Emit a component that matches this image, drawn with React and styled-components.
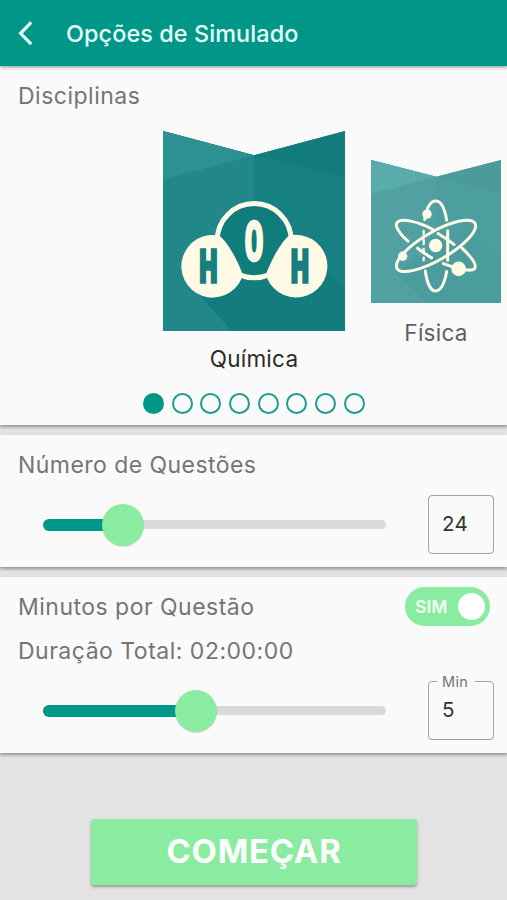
import React, { useState } from 'react';
import styled, { createGlobalStyle } from 'styled-components';

const GlobalStyle = createGlobalStyle`
  * {
    box-sizing: border-box;
  }

  body {
    margin: 0;
    background: #e3e3e3;
    font-family: Inter, 'Liberation Sans', sans-serif;
    overflow: hidden;
  }
`;

const ChemistryBanner = () => (
  <svg width="182" height="200" viewBox="163.2 131.3 181.8 199.7" preserveAspectRatio="none">
    <path d="M163.2 131.3L254.2 155.4L345 131.3V331H163.2Z" fill="#178080" />
    <path d="M163.2 131.3L254.2 155.4V240L200 294L232 331H163.2Z" fill="#218789" />
    <path d="M254.2 155.4L345 178V290L300 240H254.2Z" fill="#178181" />
    <path d="M163.2 131.3L254.2 155.4L163.2 179.8Z" fill="#2b9193" />
    <path d="M254.2 155.4L345 131.3V178Z" fill="#137d7d" />
    <path d="M198 293L232 331H345V290L300 240H250Z" fill="#137d7d" />
    <circle cx="254.3" cy="240.8" r="37" fill="#117c7c" stroke="#fefae6" strokeWidth="5" />
    <path d="M219.5 235.8A31.3 31.3 0 1 0 241.5 279L242.3 273C238 262 229 243 219.5 235.8Z" fill="#fefae6" />
    <path d="M289 235.8A31.3 31.3 0 1 1 267.5 279L266.5 273C271 262 280 243 289 235.8Z" fill="#fefae6" />
    <AtomLetter transform="translate(208.5 281) scale(.56 1)" $size={41.3} $color="#17807f">H</AtomLetter>
    <AtomLetter transform="translate(254.2 258.8) scale(.6 1)" $size={50} $color="#fefae6" $mono>O</AtomLetter>
    <AtomLetter transform="translate(300 281.5) scale(.56 1)" $size={41.3} $color="#17807f">H</AtomLetter>
  </svg>
);

const PhysicsBanner = () => (
  <svg width="130" height="143" viewBox="35 30 390 428" preserveAspectRatio="none">
    <path d="M35 30L231 80L425 30V458H35Z" fill="#4d9e9e" />
    <path d="M35 30L231 80V286L110 366L205 458H35Z" fill="#51a1a2" />
    <path d="M35 30L231 80L35 132Z" fill="#5aabac" />
    <path d="M231 80L425 30V130Z" fill="#4b9b9b" />
    <path d="M110 366L205 458H425V330L330 240L231 286Z" fill="#4b9c9c" />
    <g fill="none" stroke="#fefae6" strokeWidth="9" strokeLinecap="round">
      <path d="M196 208C202 172 214 153 229 153C246 153 257 180 262 210" />
      <path d="M198 362C203 399 215 422 229 422C245 422 256 397 262 364" />
      <path d="M193 242V253M193 268V282M193 296V308M193 322V330" strokeWidth="7" />
      <path d="M265 242V330" />
      <path d="M146 273C118 249 104 224 115 215C128 204 180 215 220 238M236 250C253 260 269 271 284 283" />
      <path d="M175 294C189 305 203 315 217 323M308 294C340 324 354 346 345 356C338 363 306 360 252 340" />
    </g>
    <ellipse cx="230" cy="287" rx="135" ry="42" transform="rotate(-30 230 287)" fill="none" stroke="#fefae6" strokeWidth="9" />
    <g fill="#fefae6">
      <circle cx="229" cy="286" r="20" />
      <circle cx="203" cy="192" r="14" />
      <circle cx="130" cy="318" r="14" />
      <circle cx="298" cy="356" r="22" />
    </g>
  </svg>
);

const Slider = ({ filled }) => (
  <Track>
    <TrackFill style={{ width: filled }} />
    <Thumb style={{ left: filled }} />
  </Track>
);

const App = () => {
  const [questions] = useState(24);
  const [minutes] = useState(5);
  const [page] = useState(0);

  return (
    <Screen>
      <GlobalStyle />
      <Header>
        <svg width="18" height="26" viewBox="0 0 18 26">
          <path d="M15.2 2.3L4.6 13.3L15.2 24.2" fill="none" stroke="#e6fffa" strokeWidth="3.2" />
        </svg>
        <Title>Opções de Simulado</Title>
      </Header>

      <Card $height={359}>
        <Label $top={17}>Disciplinas</Label>
        <Carousel>
          <Subject>
            <ChemistryBanner />
            <SubjectName $active>Química</SubjectName>
          </Subject>
          <Subject $small>
            <PhysicsBanner />
            <SubjectName>Física</SubjectName>
          </Subject>
        </Carousel>
        <Dots>
          {Array.from({ length: 8 }, (_, i) => (
            <Dot key={i} $active={i === page} />
          ))}
        </Dots>
      </Card>

      <Card $height={132}>
        <Label $top={17} $spacing={0.45}>Número de Questões</Label>
        <SliderRow $top={17}>
          <Slider filled={80} />
          <NumberBox>{questions}</NumberBox>
        </SliderRow>
      </Card>

      <Card $height={176}>
        <SwitchRow>
          <Label $spacing={0.48}>Minutos por Questão</Label>
          <Switch>
            SIM
            <SwitchKnob />
          </Switch>
        </SwitchRow>
        <Label $top={12}>Duração Total: 02:00:00</Label>
        <SliderRow $top={17}>
          <Slider filled={153} />
          <NumberBox>
            <BoxLabel>Min</BoxLabel>
            {minutes}
          </NumberBox>
        </SliderRow>
      </Card>

      <Footer>
        <StartButton>COMEÇAR</StartButton>
      </Footer>
    </Screen>
  );
};

const Screen = styled.div`
  width: 507px;
  height: 900px;
  display: flex;
  flex-direction: column;
  gap: 10px;
  background: #e3e3e3;
`;

const Header = styled.header`
  position: relative;
  z-index: 1;
  height: 66px;
  margin-bottom: -10px;
  padding-left: 16px;
  display: flex;
  align-items: center;
  gap: 32px;
  flex-shrink: 0;
  background: #009788;
  box-shadow: 0 1px 4px rgba(0, 0, 0, 0.45);
`;

const Title = styled.h1`
  margin: 0;
  font-size: 23.4px;
  font-weight: 500;
  letter-spacing: 0.1px;
  color: #e6fffa;
`;

const Card = styled.section`
  height: ${(p) => p.$height}px;
  flex-shrink: 0;
  display: flex;
  flex-direction: column;
  background: #fafafa;
  box-shadow: 0 2px 3px rgba(0, 0, 0, 0.36);
`;

const Label = styled.div`
  margin: ${(p) => p.$top || 0}px 0 0 18px;
  height: 26px;
  line-height: 26px;
  font-size: 23px;
  letter-spacing: ${(p) => p.$spacing || 0.5}px;
  white-space: nowrap;
  color: #757575;
`;

const Carousel = styled.div`
  display: flex;
  gap: 26px;
  height: 244px;
  margin-top: 22px;
  padding-left: 163px;
`;

const Subject = styled.div`
  display: flex;
  flex-direction: column;
  align-items: center;
  gap: ${(p) => (p.$small ? 17 : 15)}px;
  padding-top: ${(p) => (p.$small ? 29 : 0)}px;

  svg {
    display: block;
  }
`;

const SubjectName = styled.div`
  line-height: 26px;
  font-size: 22.5px;
  letter-spacing: 0.25px;
  color: ${(p) => (p.$active ? '#2b2b2b' : '#606060')};
`;

const AtomLetter = styled.text`
  font-family: ${(p) => (p.$mono ? "'DejaVu Sans Mono', monospace" : 'Inter, sans-serif')};
  font-size: ${(p) => p.$size}px;
  font-weight: ${(p) => (p.$mono ? 400 : 600)};
  text-anchor: middle;
  fill: ${(p) => p.$color};
  stroke: ${(p) => p.$color};
  stroke-width: 4.5px;
  vector-effect: non-scaling-stroke;
`;

const Dots = styled.div`
  display: flex;
  padding-left: 143px;
  gap: 7.7px;
  margin-top: 18px;
`;

const Dot = styled.span`
  width: 21px;
  height: 21px;
  border: 2px solid ${(p) => (p.$active ? '#009788' : '#1b9d8f')};
  border-radius: 50%;
  background: ${(p) => (p.$active ? '#009788' : 'transparent')};
`;

const SliderRow = styled.div`
  display: flex;
  align-items: center;
  justify-content: space-between;
  margin-top: ${(p) => p.$top}px;
  padding: 0 13px 0 43px;
`;

const Track = styled.div`
  position: relative;
  width: 343px;
  height: 9px;
  display: flex;
  align-items: center;
  border-radius: 5px;
  background: #dadada;
`;

const TrackFill = styled.div`
  height: 12px;
  flex-shrink: 0;
  border-radius: 6px 0 0 6px;
  background: #009788;
`;

const Thumb = styled.div`
  position: absolute;
  top: 50%;
  width: 42px;
  height: 42px;
  border-radius: 50%;
  transform: translate(-50%, -50%);
  background: #89eca0;
  box-shadow: 0 1px 1px rgba(0, 0, 0, 0.12);
`;

const NumberBox = styled.div`
  position: relative;
  width: 66px;
  height: 59px;
  padding-left: 13px;
  border: 1px solid #a2a2a2;
  border-radius: 4px;
  line-height: 56px;
  font-size: 20.5px;
  letter-spacing: 0.2px;
  color: #333;
`;

/* sits over the top border of the box */
const BoxLabel = styled.span`
  position: absolute;
  top: -9px;
  left: 8px;
  padding: 0 7px 0 5px;
  line-height: 18px;
  font-size: 14.5px;
  letter-spacing: 0.3px;
  background: #fafafa;
  color: #757575;
`;

const SwitchRow = styled.div`
  display: flex;
  align-items: center;
  justify-content: space-between;
  margin-top: 10px;
  padding-right: 17px;
`;

const Switch = styled.div`
  width: 85px;
  height: 39px;
  padding: 0 5px 0 10px;
  display: flex;
  align-items: center;
  justify-content: space-between;
  border-radius: 20px;
  background: #89eca0;
  font-size: 17.5px;
  font-weight: 600;
  color: #f4fff4;
`;

const SwitchKnob = styled.span`
  width: 27px;
  height: 27px;
  border-radius: 50%;
  background: #fff;
`;

const Footer = styled.footer`
  display: flex;
  padding: 56px 0 0 91px;
`;

const StartButton = styled.button`
  width: 326px;
  height: 66px;
  padding: 0 0 2px;
  border: none;
  border-radius: 3px;
  background: #89eca0;
  box-shadow: 0 2px 3px rgba(0, 0, 0, 0.32);
  font-family: inherit;
  font-size: 32.8px;
  font-weight: 700;
  letter-spacing: 0.8px;
  color: #fff;
`;

export default App;
